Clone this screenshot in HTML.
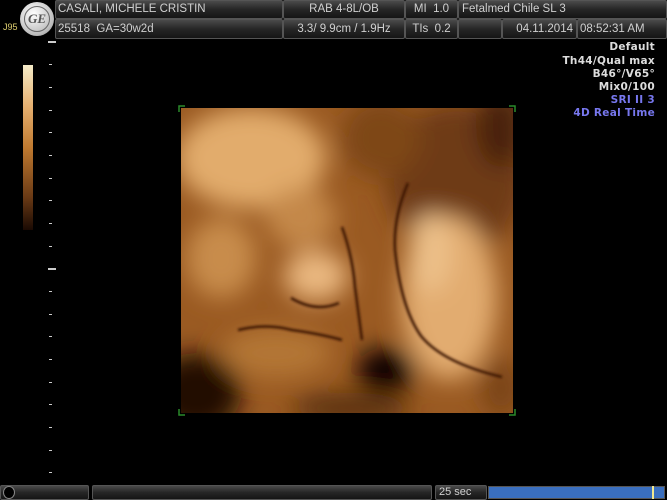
<!DOCTYPE html>
<html><head><style>
*{margin:0;padding:0;box-sizing:border-box}
body{width:667px;height:500px;background:#000;position:relative;overflow:hidden;font-family:"Liberation Sans",sans-serif}
.c{position:absolute;background:linear-gradient(#4a4a4a,#262626 50%,#151515);border:1px solid #555;border-radius:2px;color:#d0d0d0;font-size:11.5px;line-height:17px;white-space:nowrap;overflow:hidden}
.t{position:absolute;color:#ddd;font-size:10.5px;font-weight:bold;right:12px;text-align:right;letter-spacing:.3px;font-family:"DejaVu Sans","Liberation Sans",sans-serif}
.k{position:absolute;left:49px;width:3px;height:1px;background:#ccc}
</style></head><body>
<div class="c" style="left:55px;top:0;width:228px;height:19px;padding-left:2px">CASALI, MICHELE CRISTIN</div>
<div class="c" style="left:283px;top:0;width:122px;height:19px;text-align:center">RAB 4-8L/OB</div>
<div class="c" style="left:405px;top:0;width:53px;height:19px;text-align:center">MI &nbsp;1.0</div>
<div class="c" style="left:458px;top:0;width:209px;height:19px;padding-left:3px">Fetalmed Chile SL 3</div>
<div class="c" style="left:55px;top:19px;width:228px;height:20px;padding-left:2px;line-height:19px">25518 &nbsp;GA=30w2d</div>
<div class="c" style="left:283px;top:19px;width:122px;height:20px;text-align:center;line-height:19px">3.3/ 9.9cm / 1.9Hz</div>
<div class="c" style="left:405px;top:19px;width:53px;height:20px;text-align:center;line-height:19px">TIs &nbsp;0.2</div>
<div class="c" style="left:458px;top:19px;width:44px;height:20px"></div>
<div class="c" style="left:502px;top:19px;width:75px;height:20px;text-align:right;padding-right:3px;line-height:19px">04.11.2014</div>
<div class="c" style="left:577px;top:19px;width:90px;height:20px;padding-left:2px;line-height:19px">08:52:31 AM</div>
<div style="position:absolute;left:20px;top:2px;width:34px;height:34px;border-radius:50%;background:radial-gradient(circle at 40% 35%,#fff,#bbb 70%,#777);"></div>
<div style="position:absolute;left:24px;top:6px;width:26px;height:26px;border-radius:50%;border:1px solid #666;color:#555;font:italic bold 13px 'Liberation Serif',serif;text-align:center;line-height:24px">GE</div>
<div style="position:absolute;left:3px;top:22px;color:#e0d070;font-size:9px">J95</div>
<div class="t" style="top:41px">Default</div>
<div class="t" style="top:55px">Th44/Qual max</div>
<div class="t" style="top:68px">B46°/V65°</div>
<div class="t" style="top:81px">Mix0/100</div>
<div class="t" style="top:94px;color:#7777ee">SRI II 3</div>
<div class="t" style="top:107px;color:#7777ee">4D Real Time</div>
<div style="position:absolute;left:23px;top:65px;width:10px;height:165px;background:linear-gradient(#f4ebc8,#e6b070 25%,#c07a30 50%,#6a3a15 80%,#1a0a03)"></div>
<div class="k" style="top:41px;width:8px;left:48px;height:2px"></div>
<div class="k" style="top:64px"></div><div class="k" style="top:87px"></div><div class="k" style="top:110px"></div><div class="k" style="top:132px"></div><div class="k" style="top:155px"></div><div class="k" style="top:178px"></div><div class="k" style="top:200px"></div><div class="k" style="top:223px"></div><div class="k" style="top:246px"></div>
<div class="k" style="top:268px;width:8px;left:48px;height:2px"></div>
<div class="k" style="top:291px"></div><div class="k" style="top:314px"></div><div class="k" style="top:336px"></div><div class="k" style="top:359px"></div><div class="k" style="top:382px"></div><div class="k" style="top:404px"></div><div class="k" style="top:427px"></div><div class="k" style="top:450px"></div><div class="k" style="top:472px"></div>
<svg style="position:absolute;left:181px;top:108px" width="332" height="305" viewBox="0 0 332 305">
<defs><filter id="b" x="-50%" y="-50%" width="200%" height="200%"><feGaussianBlur stdDeviation="12"/></filter>
<filter id="s"><feGaussianBlur stdDeviation="1.2"/></filter></defs>
<rect width="332" height="305" fill="#9a5a22"/>
<g filter="url(#b)">
<ellipse cx="275" cy="70" rx="70" ry="75" fill="#6e3a14"/>
<ellipse cx="200" cy="30" rx="40" ry="40" fill="#7e4619"/>
<ellipse cx="320" cy="20" rx="25" ry="40" fill="#4a2008"/>
<ellipse cx="70" cy="50" rx="75" ry="50" fill="#e2ac6c"/>
<ellipse cx="40" cy="150" rx="35" ry="40" fill="#c88c4c"/>
<ellipse cx="120" cy="110" rx="35" ry="30" fill="#c48848"/>
<ellipse cx="135" cy="168" rx="32" ry="25" fill="#eab880"/>
<ellipse cx="95" cy="245" rx="55" ry="25" fill="#b37636"/>
<ellipse cx="268" cy="190" rx="48" ry="82" fill="#e2ac70"/>
<ellipse cx="250" cy="145" rx="22" ry="40" fill="#ecbf88"/>
<ellipse cx="15" cy="285" rx="45" ry="40" fill="#240e03"/>
<ellipse cx="205" cy="262" rx="30" ry="22" fill="#0e0401"/>
<ellipse cx="170" cy="300" rx="60" ry="15" fill="#5a3010"/>
<ellipse cx="320" cy="280" rx="20" ry="30" fill="#7a4418"/>
</g>
<g filter="url(#s)" fill="none" stroke="#3a1805" stroke-width="2.5">
<path d="M161 119 Q172 150 174 179 Q178 210 181 232"/>
<path d="M227 75 Q212 110 214 142 Q220 200 240 228 Q262 255 321 269"/>
<path d="M57 222 Q85 215 111 222 Q140 226 161 232"/>
<path d="M110 190 Q135 205 158 195"/>
</g>
</svg>
<svg style="position:absolute;left:178px;top:105px" width="338" height="311"><g stroke="#2a8a2a" fill="none" stroke-width="1.5"><path d="M1 7V1H7M331 1h6v6M1 304v6h6M331 310h6v-6"/></g></svg>
<div class="c" style="left:0;top:485px;width:89px;height:15px"></div>
<div style="position:absolute;left:3px;top:486px;width:12px;height:13px;border-radius:50%;background:#000;border:1px solid #888"></div>
<div class="c" style="left:92px;top:485px;width:340px;height:15px"></div>
<div class="c" style="left:435px;top:485px;width:52px;height:15px;font-size:11px;line-height:13px;padding-left:3px">25 sec</div>
<div style="position:absolute;left:488px;top:486px;width:177px;height:13px;background:#3a6fbf;border:1px solid #555"></div>
<div style="position:absolute;left:652px;top:486px;width:2px;height:13px;background:#f0e890"></div>
</body></html>
